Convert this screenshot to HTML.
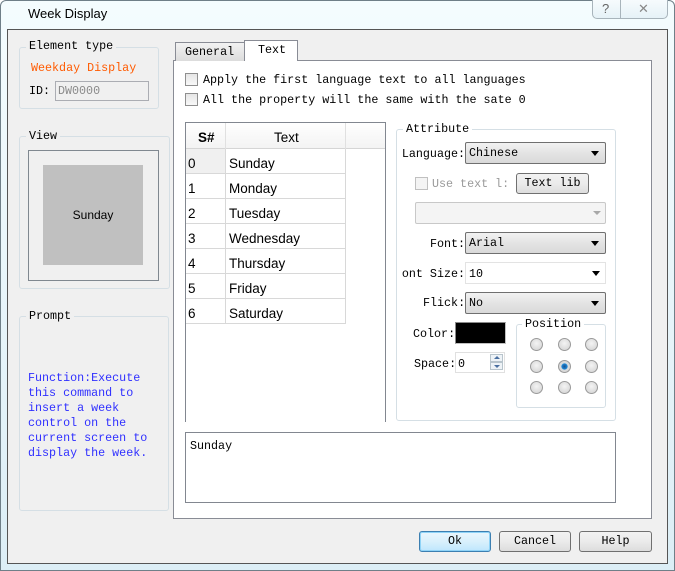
<!DOCTYPE html>
<html><head><style>
*{box-sizing:border-box;margin:0;padding:0}
body{width:675px;height:571px;overflow:hidden;background:#fff;font-family:"Liberation Mono",monospace;font-size:11.7px;color:#000;position:relative}
.a{position:absolute}
.grp{position:absolute;border:1px solid #d5dfe5;border-radius:3px}
.lg{position:absolute;background:#f0f0f0;padding:0 3px;line-height:13px}
.cb{position:absolute;width:13px;height:13px;border:1px solid #8f8f8f;background:linear-gradient(#e6e6e6,#f8f8f8)}
.dd{position:absolute;height:22px;border:1px solid #707070;border-radius:2px;background:linear-gradient(#f2f2f2,#e4e4e4 50%,#d9d9d9);padding:3px 0 0 3px;line-height:14px}
.dd:after{content:"";position:absolute;right:6px;top:8px;border-left:4px solid transparent;border-right:4px solid transparent;border-top:5px solid #000}
.btn{position:absolute;height:21px;border:1px solid #707070;border-radius:3px;background:linear-gradient(#f2f2f2,#ebebeb 50%,#dddddd);text-align:center;line-height:19px}
.rd{position:absolute;width:13px;height:13px;border-radius:50%;border:1px solid #9a9a9a;background:radial-gradient(circle at 50% 40%,#f4f4f4,#d0d0d0)}
.row{position:absolute;left:0;height:25px;border-bottom:1px solid #d8d8d8;font-family:"Liberation Sans",sans-serif;font-size:13.5px;line-height:26px}
.row span{top:2px}
.clip{position:absolute;overflow:hidden;height:16px;white-space:nowrap}
.clip span{position:absolute;right:0;top:0}
</style></head><body>
<div class="a" style="left:0;top:0;width:675px;height:571px;background:linear-gradient(#f4fcfe,#dceef6);border:1px solid #6f7f88;border-radius:6px 6px 0 0"></div>
<div class="a" style="left:28px;top:6px;font-family:'Liberation Sans',sans-serif;font-size:13px;color:#000">Week Display</div>
<div class="a" style="left:592px;top:0;width:76px;height:19px;border:1px solid #a8b4bb;border-top:none;border-radius:0 0 5px 5px;background:linear-gradient(#f6fbfd,#e6f2f7)"></div>
<div class="a" style="left:620px;top:0;width:1px;height:19px;background:#a8b4bb"></div>
<div class="a" style="left:602px;top:1px;font-family:'Liberation Sans';font-size:13px;color:#666">?</div>
<div class="a" style="left:638px;top:1px;font-family:'Liberation Sans';font-size:13px;color:#888">✕</div>
<div class="a" style="left:7px;top:29px;width:661px;height:535px;background:#f0f0f0;border:1px solid #555"></div>

<div class="grp" style="left:19px;top:47px;width:140px;height:62px"></div>
<div class="lg" style="left:26px;top:40px">Element type</div>
<div class="a" style="left:31px;top:61px;color:#ff5a00">Weekday Display</div>
<div class="a" style="left:29px;top:84px">ID:</div>
<div class="a" style="left:55px;top:81px;width:94px;height:20px;border:1px solid #abadb3;background:#f0f0f0;color:#8a8a8a;padding:2px 0 0 2px">DW0000</div>

<div class="grp" style="left:19px;top:136px;width:151px;height:153px"></div>
<div class="lg" style="left:26px;top:130px">View</div>
<div class="a" style="left:28px;top:150px;width:131px;height:131px;border:1px solid #808890"></div>
<div class="a" style="left:43px;top:165px;width:100px;height:100px;background:#c0c0c0;font-family:'Liberation Sans';font-size:12px;text-align:center;line-height:100px">Sunday</div>

<div class="grp" style="left:19px;top:316px;width:150px;height:195px"></div>
<div class="lg" style="left:26px;top:310px">Prompt</div>
<div class="a" style="left:28px;top:371px;color:#3030ff;line-height:15px">Function:Execute<br>this command to<br>insert a week<br>control on the<br>current screen to<br>display the week.</div>

<div class="a" style="left:173px;top:60px;width:479px;height:459px;background:#fff;border:1px solid #898c95"></div>
<div class="a" style="left:175px;top:42px;width:70px;height:19px;border:1px solid #898c95;border-bottom:none;background:linear-gradient(#f2f2f2,#dcdcdc);padding:2px 0 0 9px">General</div>
<div class="a" style="left:244px;top:40px;width:54px;height:21px;border:1px solid #898c95;border-bottom:none;background:#fff;padding:2px 0 0 13px">Text</div>

<div class="cb" style="left:185px;top:73px"></div><div class="a" style="left:203px;top:73px">Apply the first language text to all languages</div>
<div class="cb" style="left:185px;top:93px"></div><div class="a" style="left:203px;top:93px">All the property will the same with the sate 0</div>

<div class="a" style="left:185px;top:122px;width:201px;height:300px;border:1px solid #828790;border-bottom:none;background:#fff">
 <div class="a" style="left:0;top:0;width:199px;height:26px;background:linear-gradient(#fff,#f3f3f3);border-bottom:1px solid #d5d5d5;font-family:'Liberation Sans';font-size:13.5px;line-height:29px">
  <span class="a" style="left:12px;font-weight:bold">S#</span><span class="a" style="left:88px">Text</span>
  <div class="a" style="left:39px;top:0;width:1px;height:26px;background:#e0e0e0"></div>
  <div class="a" style="left:159px;top:0;width:1px;height:26px;background:#e0e0e0"></div>
 </div>
 <div class="a" style="left:0;top:26px;width:39px;height:25px;background:#f0f0f0"></div>
 <div class="row" style="top:26px;width:160px"><span class="a" style="left:2px">0</span><span class="a" style="left:43px">Sunday</span></div>
 <div class="row" style="top:51px;width:160px"><span class="a" style="left:2px">1</span><span class="a" style="left:43px">Monday</span></div>
 <div class="row" style="top:76px;width:160px"><span class="a" style="left:2px">2</span><span class="a" style="left:43px">Tuesday</span></div>
 <div class="row" style="top:101px;width:160px"><span class="a" style="left:2px">3</span><span class="a" style="left:43px">Wednesday</span></div>
 <div class="row" style="top:126px;width:160px"><span class="a" style="left:2px">4</span><span class="a" style="left:43px">Thursday</span></div>
 <div class="row" style="top:151px;width:160px"><span class="a" style="left:2px">5</span><span class="a" style="left:43px">Friday</span></div>
 <div class="row" style="top:176px;width:160px"><span class="a" style="left:2px">6</span><span class="a" style="left:43px">Saturday</span></div>
 <div class="a" style="left:39px;top:26px;width:1px;height:175px;background:#d8d8d8"></div>
 <div class="a" style="left:159px;top:26px;width:1px;height:175px;background:#d8d8d8"></div>
</div>

<div class="grp" style="left:396px;top:129px;width:220px;height:292px;background:#fff"></div>
<div class="lg" style="left:403px;top:123px;background:#fff">Attribute</div>
<div class="clip" style="left:402px;top:147px;width:63px"><span>Language:</span></div>
<div class="dd" style="left:465px;top:142px;width:141px">Chinese</div>
<div class="cb" style="left:415px;top:177px;border-color:#c0c0c0;background:#f4f4f4"></div>
<div class="a" style="left:432px;top:177px;color:#9a9a9a">Use text l:</div>
<div class="btn" style="left:516px;top:173px;width:73px;line-height:18px">Text lib</div>
<div class="a" style="left:415px;top:202px;width:191px;height:22px;border:1px solid #c8c8c8;border-radius:2px;background:#f4f4f4"></div>
<div class="a" style="left:593px;top:211px;border-left:4px solid transparent;border-right:4px solid transparent;border-top:4px solid #a8a8a8"></div>
<div class="a" style="left:430px;top:237px">Font:</div>
<div class="dd" style="left:465px;top:232px;width:141px">Arial</div>
<div class="clip" style="left:402px;top:267px;width:63px"><span>Font Size:</span></div>
<div class="a" style="left:465px;top:262px;width:141px;height:22px;border:1px solid #e3e3e3;background:#fff;padding:4px 0 0 3px">10</div>
<div class="a" style="left:592px;top:271px;border-left:4px solid transparent;border-right:4px solid transparent;border-top:5px solid #000"></div>
<div class="a" style="left:423px;top:296px">Flick:</div>
<div class="dd" style="left:465px;top:292px;width:141px">No</div>
<div class="a" style="left:413px;top:327px">Color:</div>
<div class="a" style="left:455px;top:322px;width:51px;height:22px;background:#000;border:1px solid #8a8a8a;border-right-color:#c0c0c0;border-bottom-color:#c0c0c0"></div>
<div class="a" style="left:414px;top:357px">Space:</div>
<div class="a" style="left:455px;top:352px;width:50px;height:21px;border:1px solid #e0e0e0;background:#fff;padding:4px 0 0 2px">0</div>
<div class="a" style="left:490px;top:354px;width:13px;height:8px;border:1px solid #b8c4cc;background:#eef3f7"></div>
<div class="a" style="left:490px;top:362px;width:13px;height:8px;border:1px solid #b8c4cc;background:#eef3f7"></div>
<div class="a" style="left:494px;top:356px;border-left:3px solid transparent;border-right:3px solid transparent;border-bottom:3px solid #4a6fa0"></div>
<div class="a" style="left:494px;top:365px;border-left:3px solid transparent;border-right:3px solid transparent;border-top:3px solid #4a6fa0"></div>
<div class="grp" style="left:516px;top:324px;width:90px;height:84px"></div>
<div class="lg" style="left:522px;top:318px;background:#fff">Position</div>
<div class="rd" style="left:530px;top:338px"></div><div class="rd" style="left:558px;top:338px"></div><div class="rd" style="left:585px;top:338px"></div>
<div class="rd" style="left:530px;top:360px"></div><div class="rd" style="left:558px;top:360px;background:radial-gradient(circle,#1d4f8a 0,#1a86d6 35%,#dcdcdc 45%,#cfcfcf)"></div><div class="rd" style="left:585px;top:360px"></div>
<div class="rd" style="left:530px;top:381px"></div><div class="rd" style="left:558px;top:381px"></div><div class="rd" style="left:585px;top:381px"></div>

<div class="a" style="left:185px;top:432px;width:431px;height:71px;border:1px solid #828790;background:#fff;padding:6px 0 0 4px">Sunday</div>

<div class="btn" style="left:419px;top:531px;width:72px;border-color:#3c7fb1;background:linear-gradient(#eaf6fd,#d9f0fc 50%,#bee6fd);box-shadow:inset 0 0 0 1px #8fd3f7">Ok</div>
<div class="btn" style="left:499px;top:531px;width:72px">Cancel</div>
<div class="btn" style="left:579px;top:531px;width:73px">Help</div>
</body></html>
